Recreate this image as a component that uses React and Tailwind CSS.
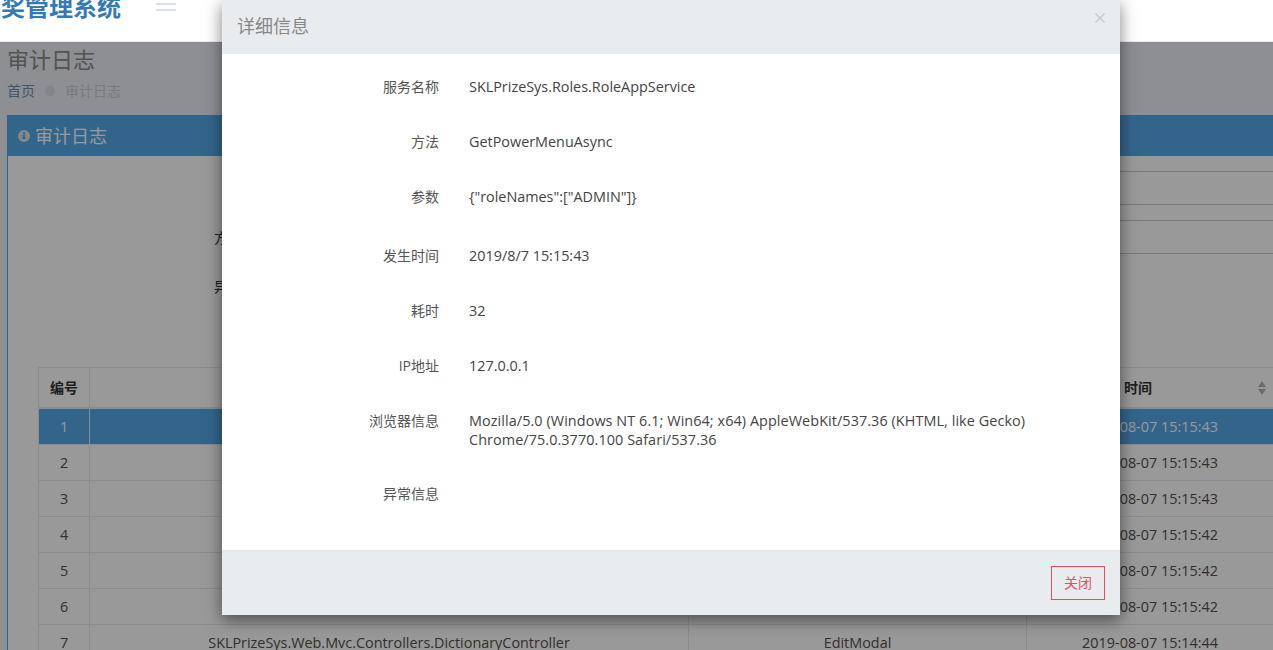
const font = { fontFamily: '"Open Sans","Noto Sans CJK SC",sans-serif' };

const details = [
  { label: '服务名称', value: 'SKLPrizeSys.Roles.RoleAppService', h: 'h-[55px]' },
  { label: '方法', value: 'GetPowerMenuAsync', h: 'h-[55px]' },
  { label: '参数', value: '{"roleNames":["ADMIN"]}', h: 'h-[59px]' },
  { label: '发生时间', value: '2019/8/7 15:15:43', h: 'h-[55px]' },
  { label: '耗时', value: '32', h: 'h-[55px]' },
  { label: 'IP地址', value: '127.0.0.1', h: 'h-[55px]' },
  { label: '浏览器信息', value: 'Mozilla/5.0 (Windows NT 6.1; Win64; x64) AppleWebKit/537.36 (KHTML, like Gecko) Chrome/75.0.3770.100 Safari/537.36', h: 'h-[73px]', extra: 'tracking-[0.08px]' },
  { label: '异常信息', value: '', h: 'h-[40px]' },
];

const rows = [
  ['1', '', '', '2019-08-07 15:15:43'],
  ['2', '', '', '2019-08-07 15:15:43'],
  ['3', '', '', '2019-08-07 15:15:43'],
  ['4', '', '', '2019-08-07 15:15:42'],
  ['5', '', '', '2019-08-07 15:15:42'],
  ['6', '', '', '2019-08-07 15:15:42'],
  ['7', 'SKLPrizeSys.Web.Mvc.Controllers.DictionaryController', 'EditModal', '2019-08-07 15:14:44'],
];

function Row({ r, i }) {
  const active = i === 0;
  return (
    <div className={`flex h-9 shrink-0 border-b border-[#e7ecf1] text-[14.4px] ${active ? 'bg-[#55a9e6] text-[#fff]' : 'text-[#55504c]'}`}>
      <div className="w-[51px] shrink-0 flex items-center justify-center border-r border-[#e7ecf1]">{r[0]}</div>
      <div className="w-[599px] shrink-0 flex items-center justify-center border-r border-[#e7ecf1]">{r[1]}</div>
      <div className="w-[338px] shrink-0 flex items-center justify-center border-r border-[#e7ecf1]">{r[2]}</div>
      <div className="flex-1 flex items-center justify-center">{r[3]}</div>
    </div>
  );
}

export default function App() {
  return (
    <div className="relative h-[650px] w-[1273px] overflow-hidden bg-[#eceff3]" style={font}>
      <div className="h-[42px] bg-white border-b border-[#e7ecf1] flex items-start relative z-20">
        <div className="w-[155px] -ml-[23px] -mt-[9px] text-[24px] leading-[32px] font-bold text-[#337ab7] whitespace-nowrap shrink-0">抽奖管理系统</div>
        <div className="flex flex-col gap-[4px] mt-[3px] ml-[24px] w-5">
          <div className="h-[2px] bg-[#d9e2ec]" />
          <div className="h-[2px] bg-[#d9e2ec]" />
        </div>
      </div>

      <div className="pl-[7px]">
        <div className="text-[22px] leading-[32px] text-[#8a8a8a] pt-[1px]">审计日志</div>
        <div className="flex items-center text-sm h-[20px] mt-[6px]">
          <span className="text-[#6f8fb3]">首页</span>
          <span className="w-[10px] h-[10px] rounded-full bg-[#d9deE9] mx-[10px]" />
          <span className="text-[#c8ccd4]">审计日志</span>
        </div>

        <div className="mt-[14px] ml-0 h-[600px] bg-white border-l border-[#55a9e6]">
          <div className="h-[41px] bg-[#55a9e6] flex items-center pl-[10px] text-white">
            <svg width="12" height="12" viewBox="0 0 12 12" className="mr-[5px]">
              <circle cx="6" cy="6" r="6" fill="#d9e2ea" />
              <rect x="4.6" y="5" width="2.6" height="4" fill="#55a9e6" />
              <rect x="4.9" y="2.4" width="2.2" height="1.8" fill="#55a9e6" />
            </svg>
            <span className="text-lg leading-none">审计日志</span>
          </div>

          <div className="h-[211px] relative">
            <div className="flex flex-col gap-[0px] pl-[1090px] pt-[15px]">
              <div className="h-[34px] border-y border-[#c2cad8]" />
              <div className="h-[34px] mt-[15px] border-y border-[#c2cad8]" />
            </div>
            <div className="absolute left-[206px] top-[72px] text-sm text-[#333]">方法</div>
            <div className="absolute left-[206px] top-[121px] text-sm text-[#333]">异常信息</div>
          </div>

          <div className="ml-[30px] border-t border-l border-[#e7ecf1] w-[1235px] flex flex-col">
            <div className="flex h-[41px] shrink-0 border-b-2 border-[#e7ecf1] text-sm font-bold text-[#333]">
              <div className="w-[51px] shrink-0 flex items-center justify-center border-r border-[#e7ecf1]">编号</div>
              <div className="w-[599px] shrink-0 border-r border-[#e7ecf1]" />
              <div className="w-[338px] shrink-0 border-r border-[#e7ecf1]" />
              <div className="flex-1 flex items-center justify-between pl-[97px] pr-[6px]">
                <span>时间</span>
                <svg width="10" height="16" viewBox="0 0 10 16"><path d="M5 1 9 7H1zM5 15 1 9h8z" fill="#b4b4b4" /></svg>
              </div>
            </div>
            {rows.map((r, i) => <Row key={i} r={r} i={i} />)}
          </div>
        </div>
      </div>

      {/* Backdrop */}
      <div className="absolute left-0 right-0 top-[42px] bottom-0 bg-black/40 z-10" />

      {/* Modal */}
      <div className="absolute left-[222px] top-0 w-[898px] h-[615px] bg-white z-30 flex flex-col shadow-[0_5px_15px_rgba(0,0,0,0.5)] text-[14.4px] text-[#444]">
        <div className="h-[54px] shrink-0 bg-[#e9ecef] relative flex items-center pl-[15px] pb-[3px]">
          <span className="text-lg text-[#888]">详细信息</span>
          <svg className="absolute right-[14px] top-[12px]" width="12" height="12" viewBox="0 0 12 12" fill="none" stroke="#c4c7cb" strokeWidth="1.3"><path d="M1.5 1.5 10.5 10.5M10.5 1.5 1.5 10.5" /></svg>
        </div>
        <div className="h-[496px] shrink-0 pt-[23px] flex flex-col">
          {details.map((d) => (
            <div key={d.label} className={`flex shrink-0 ${d.h}`}>
              <div className="w-[217px] shrink-0 text-right text-sm leading-[19px] text-[#555]">{d.label}</div>
              <div className={`w-[630px] shrink-0 ml-[30px] leading-[19px] text-[#444] ${d.extra || ''}`}>{d.value}</div>
            </div>
          ))}
        </div>
        <div className="flex-1 bg-[#e9ecef] border-t border-[#e1e4e8] flex items-start justify-end pr-[15px] pt-[15px]">
          <button className="w-[54px] h-[34px] border border-[#ef4a5f] text-[#ef4a5f] text-sm bg-transparent">关闭</button>
        </div>
      </div>
    </div>
  );
}
